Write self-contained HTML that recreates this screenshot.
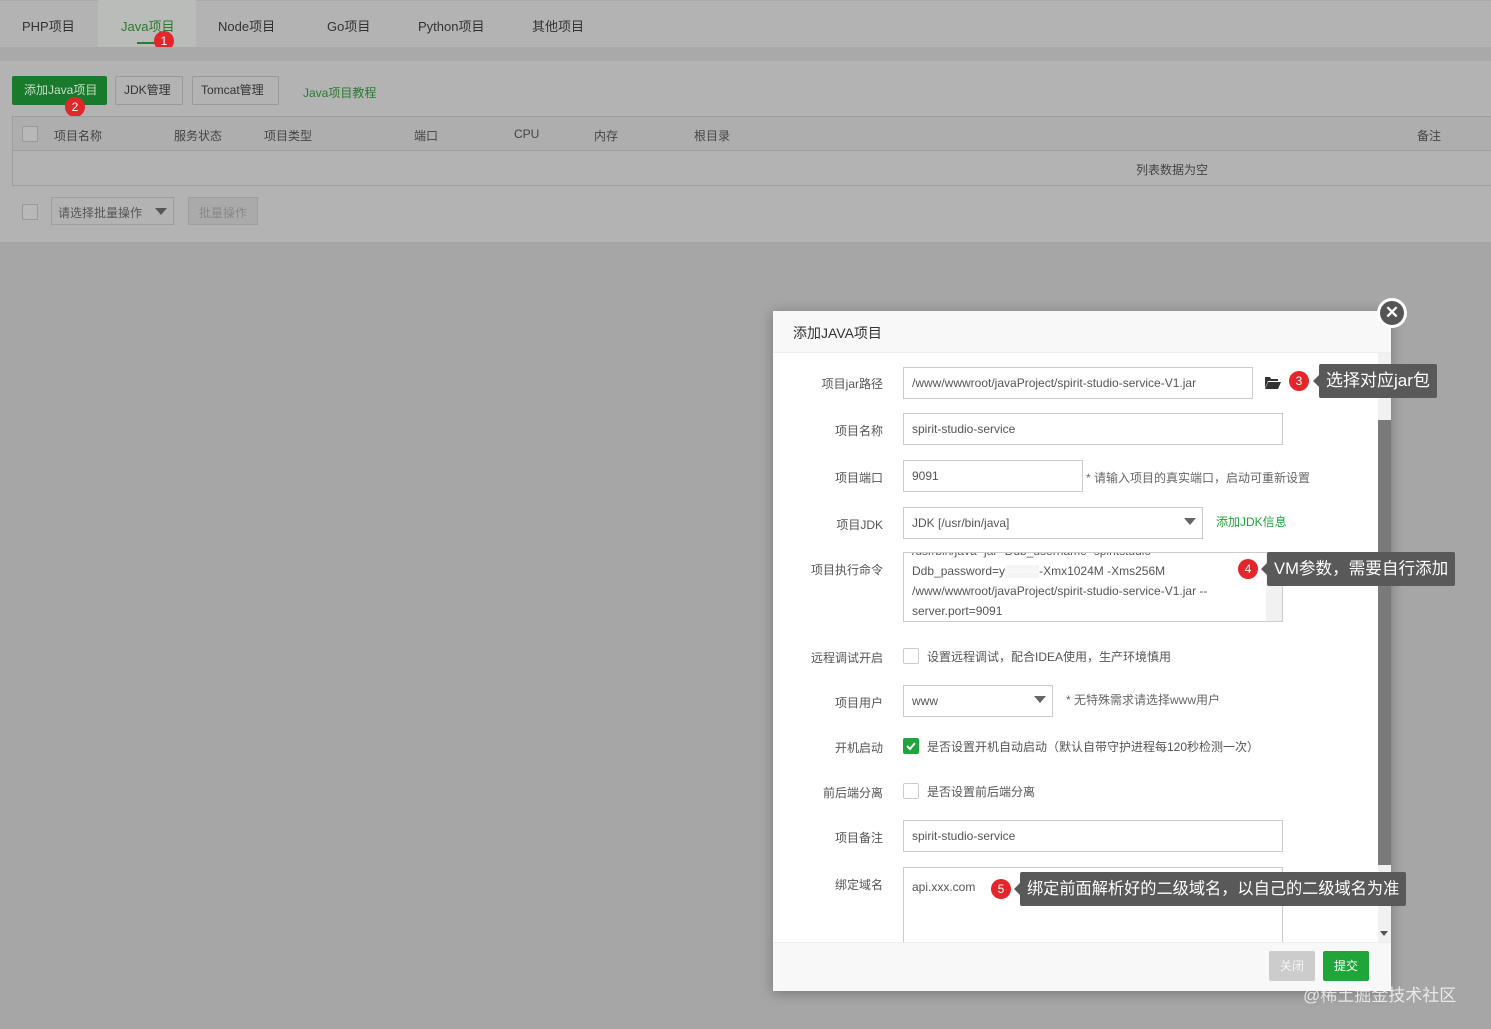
<!DOCTYPE html>
<html><head><meta charset="utf-8"><style>
*{box-sizing:border-box;margin:0;padding:0}
body{width:1491px;height:1029px;overflow:hidden;background:#a6a6a6;font-family:"Liberation Sans","Noto Sans CJK SC",sans-serif;font-size:12px;color:#333;position:relative}
.abs{position:absolute;white-space:nowrap}
.tabs{left:0;top:0;width:1491px;height:47px;background:#b3b3b3;border-top:1px solid #aaa}
.tab{position:absolute;top:16px;font-size:13px;color:#333;white-space:nowrap}
.strip{left:0;top:47px;width:1491px;height:14px;background:#a9a9a9}
.panel{left:0;top:61px;width:1491px;height:181px;background:#b3b3b3}
.btn{position:absolute;height:29px;line-height:27px;border:1px solid #9a9a9a;border-radius:2px;padding:0 8px;font-size:12px;color:#333;white-space:nowrap}
.badge{position:absolute;width:20px;height:20px;border-radius:50%;background:#e3262b;color:#fff;font-size:12px;text-align:center;line-height:20px}
.cb{position:absolute;width:16px;height:16px;border:1px solid #999;border-radius:2px;background:#b8b8b8}
.th{position:absolute;top:127px;color:#444}
.modal{left:773px;top:311px;width:618px;height:680px;background:#fff;box-shadow:0 2px 12px rgba(0,0,0,.3)}
.mh{position:absolute;left:0;top:0;width:618px;height:42px;background:#f8f8f8;border-bottom:1px solid #eee;padding:12px 20px;font-size:14px;color:#333}
.lbl{position:absolute;width:110px;text-align:right;left:0;font-size:12px;color:#555}
.inp{position:absolute;left:130px;height:32px;border:1px solid #ccc;padding:0 8px;line-height:30px;font-size:12px;color:#555;background:#fff;white-space:nowrap}
.tip{position:absolute;background:#595959;color:#fff;font-size:16px;height:34px;line-height:34px;padding:0 7px;border-radius:2px;white-space:nowrap}
.tip:before{content:"";position:absolute;left:-6px;top:11px;border:6px solid transparent;border-left:0;border-right-color:#595959}
.note{position:absolute;color:#666;font-size:12px;white-space:nowrap}
.caret{position:absolute;width:0;height:0;border:6px solid transparent;border-top:7px solid #666;border-bottom:0}
</style></head><body>
<div class="abs tabs"></div>
<div class="abs" style="left:98px;top:0;width:98px;height:47px;background:#b9bcb9"></div>
<div class="tab" style="left:22px">PHP项目</div>
<div class="tab" style="left:121px;color:#2a7a32">Java项目</div>
<div class="abs" style="left:137px;top:42px;width:18px;height:2px;background:#2a7a32"></div>
<div class="badge" style="left:154px;top:31px">1</div>
<div class="tab" style="left:218px">Node项目</div>
<div class="tab" style="left:327px">Go项目</div>
<div class="tab" style="left:418px">Python项目</div>
<div class="tab" style="left:532px">其他项目</div>
<div class="abs strip"></div>
<div class="abs panel"></div>
<div class="btn" style="left:12px;top:76px;background:#1a7a2c;border-color:#1a7a2c;color:#c8dcc8;width:95px;padding:0 0 0 11px">添加Java项目</div>
<div class="badge" style="left:65px;top:97px">2</div>
<div class="btn" style="left:115px;top:76px;width:68px">JDK管理</div>
<div class="btn" style="left:192px;top:76px;width:87px">Tomcat管理</div>
<div class="abs" style="left:303px;top:84px;color:#2a7a32">Java项目教程</div>
<div class="abs" style="left:12px;top:116px;width:1479px;height:70px;border:1px solid #9e9e9e;border-right:0"></div>
<div class="abs" style="left:13px;top:117px;width:1478px;height:34px;background:#aeaeae;border-bottom:1px solid #9e9e9e"></div>
<div class="cb" style="left:22px;top:126px"></div>
<div class="th" style="left:54px">项目名称</div>
<div class="th" style="left:174px">服务状态</div>
<div class="th" style="left:264px">项目类型</div>
<div class="th" style="left:414px">端口</div>
<div class="th" style="left:514px">CPU</div>
<div class="th" style="left:594px">内存</div>
<div class="th" style="left:694px">根目录</div>
<div class="th" style="left:1417px">备注</div>
<div class="abs" style="left:1136px;top:161px;color:#444">列表数据为空</div>
<div class="cb" style="left:22px;top:204px"></div>
<div class="abs" style="left:51px;top:197px;width:123px;height:28px;border:1px solid #9e9e9e;padding:6px 0 0 6px;color:#555">请选择批量操作</div>
<div class="caret" style="left:155px;top:208px;border-top-color:#555"></div>
<div class="abs" style="left:188px;top:197px;width:70px;height:28px;border:1px solid #9e9e9e;background:#aaa;padding:6px 0 0 10px;color:#888">批量操作</div>

<div class="abs modal">
<div class="mh">添加JAVA项目</div>
<div class="abs" style="left:605px;top:42px;width:13px;height:67px;background:#f1f1f1"></div>
<div class="abs" style="left:605px;top:109px;width:13px;height:445px;background:#7a7a7a"></div>
<div class="abs" style="left:605px;top:554px;width:13px;height:77px;background:#f1f1f1"></div>
<div class="abs" style="left:607px;top:620px;border:4px solid transparent;border-top:5px solid #555;border-bottom:0"></div>

<div class="lbl" style="top:64px">项目jar路径</div>
<div class="inp" style="top:56px;width:350px">/www/wwwroot/javaProject/spirit-studio-service-V1.jar</div>
<svg class="abs" style="left:492px;top:65px" width="16" height="13" viewBox="0 0 16 13"><path d="M0 1h5l1 2h7v2H3L0 12z M3 6h13l-3 7H0z" fill="#333"/></svg>
<div class="lbl" style="top:111px">项目名称</div>
<div class="inp" style="top:102px;width:380px">spirit-studio-service</div>
<div class="lbl" style="top:158px">项目端口</div>
<div class="inp" style="top:149px;width:180px">9091</div>
<div class="note" style="left:313px;top:158px">* 请输入项目的真实端口，启动可重新设置</div>
<div class="lbl" style="top:205px">项目JDK</div>
<div class="inp" style="top:196px;width:300px">JDK [/usr/bin/java]</div>
<div class="caret" style="left:411px;top:207px"></div>
<div class="abs" style="left:443px;top:202px;color:#20a53a">添加JDK信息</div>
<div class="lbl" style="top:250px">项目执行命令</div>
<div class="inp" style="top:241px;width:380px;height:70px;line-height:20px;padding-top:0;overflow:hidden">
<div style="margin-top:-12px;color:#555">/usr/bin/java -jar -Ddb_username=spiritstudio</div>
<div>Ddb_password=y<span style="color:#ddd">▒▒▒▒</span>-Xmx1024M -Xms256M</div>
<div>/www/wwwroot/javaProject/spirit-studio-service-V1.jar --</div>
<div>server.port=9091</div></div>
<div class="abs" style="left:493px;top:242px;width:16px;height:68px;background:#f1f1f1"></div>
<div class="lbl" style="top:338px">远程调试开启</div>
<div class="cb" style="left:130px;top:337px;background:#fff;border-color:#ccc"></div>
<div class="note" style="left:154px;top:337px;color:#555">设置远程调试，配合IDEA使用，生产环境慎用</div>
<div class="lbl" style="top:383px">项目用户</div>
<div class="inp" style="top:374px;width:150px">www</div>
<div class="caret" style="left:261px;top:385px"></div>
<div class="note" style="left:293px;top:380px">* 无特殊需求请选择www用户</div>
<div class="lbl" style="top:428px">开机启动</div>
<div class="cb" style="left:130px;top:427px;background:#20a53a;border-color:#20a53a"><svg width="14" height="14" viewBox="0 0 14 14" style="position:absolute;left:0;top:0"><path d="M3 7l3 3 5-6" stroke="#fff" stroke-width="2" fill="none"/></svg></div>
<div class="note" style="left:154px;top:427px;color:#555">是否设置开机自动启动（默认自带守护进程每120秒检测一次）</div>
<div class="lbl" style="top:473px">前后端分离</div>
<div class="cb" style="left:130px;top:472px;background:#fff;border-color:#ccc"></div>
<div class="note" style="left:154px;top:472px;color:#555">是否设置前后端分离</div>
<div class="lbl" style="top:518px">项目备注</div>
<div class="inp" style="top:509px;width:380px">spirit-studio-service</div>
<div class="lbl" style="top:565px">绑定域名</div>
<div class="inp" style="top:556px;width:380px;height:76px;border-bottom:0;line-height:20px;padding-top:9px">api.xxx.com</div>
<div class="abs" style="left:0;top:631px;width:618px;height:49px;background:#f8f8f8;border-top:1px solid #eee"></div>
<div class="abs" style="left:496px;top:640px;width:46px;height:30px;background:#ccc;color:#f4f4f4;border-radius:2px;text-align:center;line-height:30px">关闭</div>
<div class="abs" style="left:550px;top:640px;width:46px;height:30px;background:#20a53a;color:#fff;border-radius:2px;text-align:center;line-height:30px">提交</div>
</div>
<div class="abs" style="left:1377px;top:298px;width:30px;height:30px;border-radius:50%;background:#fff"></div>
<div class="abs" style="left:1380px;top:301px;width:24px;height:24px;border-radius:50%;background:#555;color:#fff;font-size:17px;line-height:23px;text-align:center;font-weight:bold">✕</div>

<div class="badge" style="left:1289px;top:371px">3</div>
<div class="tip" style="left:1319px;top:364px;font-size:17px">选择对应jar包</div>
<div class="badge" style="left:1238px;top:559px">4</div>
<div class="tip" style="left:1267px;top:552px;font-size:16.6px">VM参数，需要自行添加</div>
<div class="badge" style="left:991px;top:879px">5</div>
<div class="tip" style="left:1020px;top:872px;font-size:16.2px">绑定前面解析好的二级域名，以自己的二级域名为准</div>
<div class="abs" style="left:1303px;top:981px;font-size:17px;color:rgba(255,255,255,.75)">@稀土掘金技术社区</div>
</body></html>
